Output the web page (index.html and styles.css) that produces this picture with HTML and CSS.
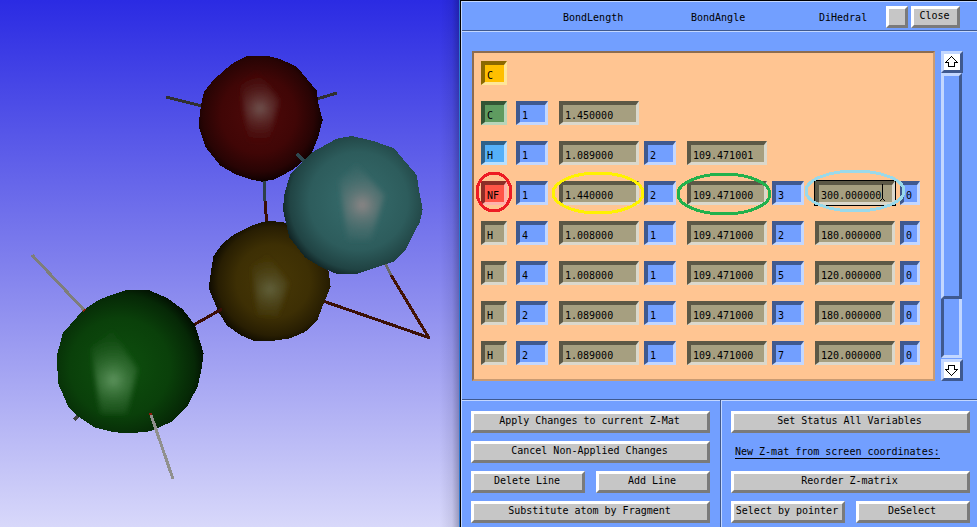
FILE: index.html
```html
<!DOCTYPE html>
<html lang="en">
<head>
<meta charset="utf-8">
<title>Z-matrix editor</title>
<link rel="stylesheet" href="styles.css">
</head>
<body>
<main class="app">
  <section class="scene" aria-label="Molecule view">
    <svg class="molecule" viewBox="0 0 460 527" preserveAspectRatio="xMidYMid slice" aria-hidden="true">
      <defs>
        <radialGradient id="red" cx=".48" cy=".47" r=".55"><stop offset="0" stop-color="#4f0909"/><stop offset=".55" stop-color="#400606"/><stop offset=".82" stop-color="#280404"/><stop offset="1" stop-color="#080000"/></radialGradient>
        <radialGradient id="cyan" cx=".54" cy=".47" r=".59"><stop offset="0" stop-color="#376d6d"/><stop offset=".6" stop-color="#2d5c5c"/><stop offset=".84" stop-color="#204343"/><stop offset="1" stop-color="#091414"/></radialGradient>
        <radialGradient id="gold" cx=".53" cy=".5" r=".55"><stop offset="0" stop-color="#483806"/><stop offset=".55" stop-color="#3d2f04"/><stop offset=".82" stop-color="#281e02"/><stop offset="1" stop-color="#080600"/></radialGradient>
        <radialGradient id="green" cx=".43" cy=".54" r=".62"><stop offset="0" stop-color="#0e500e"/><stop offset=".55" stop-color="#0a400a"/><stop offset=".82" stop-color="#062806"/><stop offset="1" stop-color="#000400"/></radialGradient>
        <radialGradient id="redShine" gradientUnits="userSpaceOnUse" cx="210" cy="205" r="100"><stop offset="0" stop-color="#705450"/><stop offset=".4" stop-color="#603634" stop-opacity=".7"/><stop offset="1" stop-color="#4a1111" stop-opacity=".15"/></radialGradient>
        <radialGradient id="cyanShine" gradientUnits="userSpaceOnUse" cx="517" cy="495" r="110"><stop offset="0" stop-color="#8e8686"/><stop offset=".4" stop-color="#6c7a7a" stop-opacity=".7"/><stop offset="1" stop-color="#4b7070" stop-opacity=".2"/></radialGradient>
        <radialGradient id="goldShine" gradientUnits="userSpaceOnUse" cx="240" cy="208" r="95"><stop offset="0" stop-color="#62623c"/><stop offset=".4" stop-color="#555029" stop-opacity=".7"/><stop offset="1" stop-color="#494215" stop-opacity=".1"/></radialGradient>
        <radialGradient id="greenShine" gradientUnits="userSpaceOnUse" cx="340" cy="420" r="130"><stop offset="0" stop-color="#5d945d"/><stop offset=".4" stop-color="#3d763d" stop-opacity=".75"/><stop offset="1" stop-color="#245c24" stop-opacity=".15"/></radialGradient>
        <filter id="soft" x="-20%" y="-20%" width="140%" height="140%"><feGaussianBlur stdDeviation="8"/></filter>
      </defs>

      <g class="stick">
        <path stroke="#303030" d="M166 97L202 106M317 99L337 93"/>
        <path stroke="#2d4048" d="M264 178L265 201"/>
        <path stroke="#3a0e06" d="M265 201L267 226"/>
        <path stroke="#444" d="M74 420L81 413"/>
        <path stroke="#3b1006" d="M320 300L430 338"/>
        <path stroke="#686868" d="M385 263L391 275"/>
        <path stroke="#431306" d="M391 275L429 338"/>
      </g>

      <g transform="translate(190 220) scale(.33333)">
        <polygon class="ball" fill="url(#gold)" points="220,5 245,3 285,8 340,35 390,90 415,148 422,200 403,245 382,300 345,336 300,355 240,364 195,364 155,347 112,318 85,275 56,205 63,155 70,110 95,73 130,45 190,15"/>
        <polygon fill="url(#goldShine)" filter="url(#soft)" points="232,105 295,190 264,288 203,285 186,140"/>
      </g>
      <path class="stick" stroke="#3c0e06" d="M190 327L222 309"/>

      <g transform="translate(190 40) scale(.33333)">
        <polygon class="ball" fill="url(#red)" points="170,48 235,48 270,57 320,80 380,152 385,190 398,240 385,290 365,340 310,388 255,418 215,425 180,418 135,402 90,376 47,322 28,265 28,235 33,195 42,155 70,120 125,72"/>
        <polygon fill="url(#redShine)" filter="url(#soft)" points="200,90 268,180 237,306 176,306 150,135"/>
      </g>
      <path class="stick" stroke="#2d4850" d="M297 154L305 162"/>

      <g transform="translate(190 40) scale(.33333)">
        <polygon class="ball" fill="url(#cyan)" points="485,288 550,303 612,325 680,405 687,450 698,508 690,545 645,632 612,665 550,685 495,703 440,702 390,680 345,652 298,592 280,515 281,470 300,405 330,372 370,335 440,296"/>
        <polygon fill="url(#cyanShine)" filter="url(#soft)" points="500,373 584,466 543,600 472,600 448,422"/>
      </g>

      <g transform="translate(0 240) scale(.33333)">
        <polygon class="ball" fill="url(#green)" points="380,150 445,150 500,173 548,208 585,255 611,340 605,385 593,440 560,502 515,545 450,574 390,580 345,577 285,563 235,530 205,500 175,432 170,350 188,280 245,215 290,183 325,168"/>
        <polygon fill="url(#greenShine)" filter="url(#soft)" points="337,272 413,388 381,522 301,522 273,325"/>
      </g>
      <g class="stick">
        <path stroke="#7e7e7a" d="M32 255L84 310"/>
        <path stroke="#8c1a0a" d="M84 310L85 311M150 413L151 415"/>
        <path stroke="#90908e" d="M151 415L173 479"/>
      </g>
    </svg>
  </section>

  <form class="panel">
    <header class="head">
      <span class="col">BondLength</span>
      <span class="col">BondAngle</span>
      <span class="col">DiHedral</span>
      <div class="tools">
        <button type="button" class="btn square" aria-label="Option"></button>
        <button type="button" class="btn close">Close</button>
      </div>
    </header>

    <section class="body">
      <div class="list">
        <div class="row">
          <input class="cell atom orange" aria-label="Atom 1" value="C">
        </div>
        <div class="row">
          <input class="cell atom green" aria-label="Atom 2" value="C">
          <div class="pair"><input class="cell ref" aria-label="Bond to" value="1"><input class="cell value" aria-label="Bond length" value="1.450000"></div>
        </div>
        <div class="row">
          <input class="cell atom sky" aria-label="Atom 3" value="H">
          <div class="pair"><input class="cell ref" aria-label="Bond to" value="1"><input class="cell value" aria-label="Bond length" value="1.089000"></div>
          <div class="pair"><input class="cell ref" aria-label="Angle to" value="2"><input class="cell value" aria-label="Bond angle" value="109.471001"></div>
        </div>
        <div class="row">
          <input class="cell atom red" aria-label="Atom 4" value="NF">
          <div class="pair"><input class="cell ref" aria-label="Bond to" value="1"><input class="cell value" aria-label="Bond length" value="1.440000"></div>
          <div class="pair"><input class="cell ref" aria-label="Angle to" value="2"><input class="cell value" aria-label="Bond angle" value="109.471000"></div>
          <div class="pair"><input class="cell ref" aria-label="Dihedral to" value="3"><input class="cell value active" aria-label="Dihedral" value="300.000000"></div>
          <input class="cell flag" aria-label="Status" value="0">
          <svg class="marks" width="440" height="24" viewBox="0 0 440 24" aria-hidden="true">
            <path class="caret" d="M401.500 3V18M401.500 17.500L398.500 20.500M401.500 17.500L404.500 20.500"/>
            <ellipse cx="13" cy="11" rx="17" ry="19" stroke="#ed1c24"/>
            <ellipse cx="117" cy="12" rx="45" ry="20" stroke="#fff200"/>
            <ellipse cx="243" cy="13" rx="46" ry="20" stroke="#22b14c"/>
            <ellipse cx="374" cy="10" rx="49" ry="20" stroke="#99d9ea"/>
          </svg>
        </div>
        <div class="row">
          <input class="cell atom" aria-label="Atom 5" value="H">
          <div class="pair"><input class="cell ref" aria-label="Bond to" value="4"><input class="cell value" aria-label="Bond length" value="1.008000"></div>
          <div class="pair"><input class="cell ref" aria-label="Angle to" value="1"><input class="cell value" aria-label="Bond angle" value="109.471000"></div>
          <div class="pair"><input class="cell ref" aria-label="Dihedral to" value="2"><input class="cell value" aria-label="Dihedral" value="180.000000"></div>
          <input class="cell flag" aria-label="Status" value="0">
        </div>
        <div class="row">
          <input class="cell atom" aria-label="Atom 6" value="H">
          <div class="pair"><input class="cell ref" aria-label="Bond to" value="4"><input class="cell value" aria-label="Bond length" value="1.008000"></div>
          <div class="pair"><input class="cell ref" aria-label="Angle to" value="1"><input class="cell value" aria-label="Bond angle" value="109.471000"></div>
          <div class="pair"><input class="cell ref" aria-label="Dihedral to" value="5"><input class="cell value" aria-label="Dihedral" value="120.000000"></div>
          <input class="cell flag" aria-label="Status" value="0">
        </div>
        <div class="row">
          <input class="cell atom" aria-label="Atom 7" value="H">
          <div class="pair"><input class="cell ref" aria-label="Bond to" value="2"><input class="cell value" aria-label="Bond length" value="1.089000"></div>
          <div class="pair"><input class="cell ref" aria-label="Angle to" value="1"><input class="cell value" aria-label="Bond angle" value="109.471000"></div>
          <div class="pair"><input class="cell ref" aria-label="Dihedral to" value="3"><input class="cell value" aria-label="Dihedral" value="180.000000"></div>
          <input class="cell flag" aria-label="Status" value="0">
        </div>
        <div class="row">
          <input class="cell atom" aria-label="Atom 8" value="H">
          <div class="pair"><input class="cell ref" aria-label="Bond to" value="2"><input class="cell value" aria-label="Bond length" value="1.089000"></div>
          <div class="pair"><input class="cell ref" aria-label="Angle to" value="1"><input class="cell value" aria-label="Bond angle" value="109.471000"></div>
          <div class="pair"><input class="cell ref" aria-label="Dihedral to" value="7"><input class="cell value" aria-label="Dihedral" value="120.000000"></div>
          <input class="cell flag" aria-label="Status" value="0">
        </div>
      </div>
      <div class="scroll">
        <button type="button" class="arrow" aria-label="Scroll up">
          <svg width="16" height="16" viewBox="0 0 16 16" aria-hidden="true"><path d="M7.500 2.500L13.500 8.500H10.500V12.500H4.500V8.500H1.500Z"/></svg>
        </button>
        <div class="thumb"></div>
        <div class="trough"></div>
        <button type="button" class="arrow" aria-label="Scroll down">
          <svg width="16" height="16" viewBox="0 0 16 16" aria-hidden="true"><path d="M7.500 13.500L13.500 7.500H10.500V3.500H4.500V7.500H1.500Z"/></svg>
        </button>
      </div>
    </section>

    <footer class="actions">
      <div class="group">
        <button type="button" class="btn wide">Apply Changes to current Z-Mat</button>
        <button type="button" class="btn wide">Cancel Non-Applied Changes</button>
        <button type="button" class="btn">Delete Line</button>
        <button type="button" class="btn">Add Line</button>
        <button type="button" class="btn wide">Substitute atom by Fragment</button>
      </div>
      <div class="group second">
        <button type="button" class="btn wide">Set Status All Variables</button>
        <p class="caption wide"><span>New Z-mat from screen coordinates:</span></p>
        <button type="button" class="btn wide">Reorder Z-matrix</button>
        <button type="button" class="btn">Select by pointer</button>
        <button type="button" class="btn">DeSelect</button>
      </div>
    </footer>
  </form>
</main>
</body>
</html>
```
FILE: styles.css
```css
:root {
  --blue: #729fff;
  --blue-light: #c3d7ff;
  --blue-dark: #3f598f;
}

* { box-sizing: border-box; }

body {
  margin: 0;
  color: #000;
  font: 10px/16px "DejaVu Sans Mono", monospace;
}

button, input { font: inherit; color: inherit; margin: 0; border-radius: 0; }

.app {
  display: grid;
  grid-template-columns: minmax(0, 460fr) minmax(517px, 517fr);
  min-height: 100vh;
}

/* 3D view */
.scene {
  position: relative;
  overflow: hidden;
  box-shadow: inset -1px 0 #2b78d0;
  background:
    linear-gradient(to left, rgba(0, 0, 30, .3), rgba(0, 0, 30, .08) 8px, transparent 20px),
    linear-gradient(#2b2be3, #8080ed 50%, #d8d8fa);
}
.molecule { position: absolute; width: 100%; height: 100%; }
.ball { shape-rendering: crispEdges; }
.stick { fill: none; stroke-width: 3; shape-rendering: crispEdges; }

/* Editor panel */
.panel {
  display: flex;
  flex-direction: column;
  background: var(--blue);
  border-top: 1px solid #000;
  border-left: 1px solid #000;
  box-shadow: inset 1px 1px var(--blue-light);
  padding: 1px 0 0 1px;
}

.head {
  display: flex;
  align-items: center;
  padding: 4px 17px 2px 101px;
  border-bottom: 1px solid var(--blue-dark);
}
.col { width: 128px; padding-top: 2px; }
.tools { display: flex; gap: 3px; margin-left: auto; }
.head .col:nth-child(3) { width: auto; }

.btn {
  height: 22px;
  padding: 0 2px 3px 0;
  border: 3px solid;
  border-color: #fff #7a7a7a #7a7a7a #fff;
  background: #c6c6c6;
  line-height: 13px;
  white-space: nowrap;
}
.square { width: 22px; }
.close { width: 49px; }

.body {
  display: flex;
  gap: 6px;
  padding: 20px 14px 18px 10px;
  box-shadow: inset 0 1px var(--blue-light);
}

.list {
  flex: 1;
  display: flex;
  flex-direction: column;
  gap: 16px;
  padding: 8px 7px 14px;
  border: 2px solid;
  border-color: #8c6c50 #c99b73 #c99b73 #8c6c50;
  background: #ffc592;
}
.row { display: flex; position: relative; gap: 5px; }
.pair { display: flex; gap: 11px; }

.cell {
  width: 32px;
  height: 24px;
  padding: 3px 0 0 2px;
  border: solid;
  border-width: 4px 3px 3px 4px;
  border-color: var(--blue-dark) var(--blue-light) var(--blue-light) var(--blue-dark);
  background: var(--blue);
  line-height: 14px;
}
.value, .atom {
  background: #a69f80;
  border-color: #5c5846 #dbd8cc #dbd8cc #5c5846;
}
.value { width: 80px; }
.atom { width: 26px; margin-right: 4px; }
.flag { width: 20px; }
.orange { background: #ffbf00; border-color: #8c6900 #ffe699 #ffe699 #8c6900; }
.green { background: #5f9b60; border-color: #345535 #b9d5b9 #b9d5b9 #345535; }
.sky { background: #55b0f8; border-color: #2f618a #b9e0ff #b9e0ff #2f618a; }
.red { background: #ff5547; border-color: #8c2e27 #ffb3ac #ffb3ac #8c2e27; }
.active { outline: 1px solid #000; }

.marks {
  position: absolute;
  top: 0;
  left: 0;
  overflow: visible;
  fill: none;
  stroke-width: 3;
  shape-rendering: crispEdges;
  pointer-events: none;
}
.caret { stroke: #000; stroke-width: 1; }

.scroll { display: flex; flex-direction: column; width: 22px; }
.arrow {
  height: 22px;
  padding: 0;
  border: 3px solid;
  border-color: var(--blue-light) var(--blue-dark) var(--blue-dark) var(--blue-light);
  background: #fff;
}
.arrow svg { display: block; fill: #fff; stroke: #000; shape-rendering: crispEdges; }
.thumb, .trough { margin-right: 1px; border: 3px solid; }
.thumb {
  flex: 227;
  border-color: var(--blue-light) var(--blue-dark) var(--blue-dark) var(--blue-light);
}
.trough {
  flex: 58;
  margin-bottom: 1px;
  border-top: 0;
  border-color: var(--blue-light) var(--blue-light) var(--blue-light) var(--blue-dark);
}

.actions {
  flex: 1;
  display: grid;
  grid-template-columns: 259fr 256fr;
  border-top: 1px solid var(--blue-dark);
}
.group {
  display: grid;
  grid-template-columns: 1fr 1fr;
  align-content: start;
  gap: 8px 11px;
  padding: 11px 10px 4px 9px;
  border-right: 1px solid var(--blue-dark);
  box-shadow: inset 0 1px var(--blue-light);
}
.second {
  padding: 11px 7px 4px 10px;
  border-right: 0;
  box-shadow: inset 1px 1px var(--blue-light);
}
.wide { grid-column: 1 / -1; }
.caption { height: 22px; margin: 0; padding: 4px 4px 0; line-height: 13px; }
.caption span { display: inline-block; border-bottom: 1px solid #000; }
```
